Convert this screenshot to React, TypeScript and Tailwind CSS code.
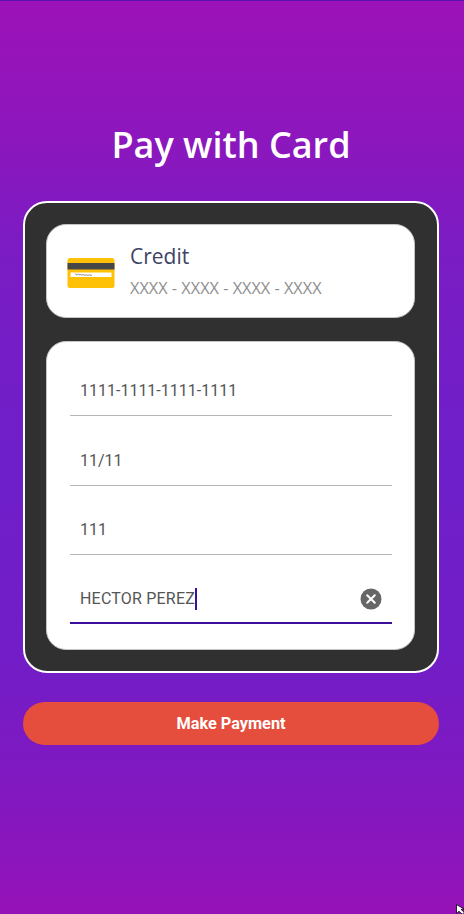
import React from 'react'

const CardIcon = () => (
  <svg width="48" height="32" viewBox="0 0 48 32" className="shrink-0 mt-[3px]">
    <rect x="0.5" y="1" width="47" height="30" rx="2.5" fill="#ffc107" />
    <rect x="0.5" y="6" width="47" height="6.5" fill="#474747" />
    <rect x="3.5" y="15.5" width="41" height="4.5" fill="#ffffff" />
    <path d="M8 17.5c1-1.6 1.6 1.4 2.6 0s1.4 1 2.4.2 1.6 1 2.6.2 1.8.8 3 .2 1.8.6 3 0 2 .6 3.4.2" fill="none" stroke="#555555" strokeWidth="0.7" />
  </svg>
)

const Field = ({ value, active, className }: { value: string; active?: boolean; className: string }) => (
  <div className={`${className} h-[50px] flex items-center px-[10px] ${active ? 'border-b-2 border-[#3b0f9c] pt-[2px]' : 'border-b border-[#b5b5b5]'}`}>
    <span className={active ? "text-[16px] tracking-[0.2px] text-[#555555] font-['Roboto',sans-serif]" : "text-[16px] text-[#555555] font-['Roboto',sans-serif]"}>{value}</span>
    {active && <span className="w-[2px] h-[22px] bg-[#3b0f9c]"></span>}
    {active && (
      <svg width="22" height="22" viewBox="0 0 22 22" className="ml-auto">
        <circle cx="11" cy="11" r="10.5" fill="#666666" />
        <path d="M7.2 7.2l7.6 7.6M14.8 7.2l-7.6 7.6" stroke="#ffffff" strokeWidth="2" strokeLinecap="round" />
      </svg>
    )}
  </div>
)

export default function App() {
  return (
    <div className="relative w-[464px] h-[914px] overflow-hidden border-t border-[#5a12b0] bg-[linear-gradient(to_bottom,#9c12b8_0%,#8c17bd_15%,#7a1cc4_28%,#6e1fc9_50%,#721dc7_72%,#8317bf_88%,#9612b8_100%)] pl-[23px] pr-[25px] font-['Open_Sans',sans-serif]">
      <h1 className="mt-[118px] h-[52px] text-center text-[36px] leading-[52px] font-semibold text-white">
        Pay with Card
      </h1>

      <div className="mt-[30px] h-[472px] rounded-[24px] border-2 border-white bg-[#303030] pl-[21px] pr-[22px] pt-[21px]">
        <div className="h-[94px] rounded-[20px] border border-[#c4c4c4] bg-white flex items-center pl-[20px] gap-[15px]">
          <CardIcon />
          <div>
            <div className="text-[21px] leading-[27px] font-medium text-[#3d4463]">Credit</div>
            <div className="mt-[7px] text-[16.3px] leading-[22px] text-[#8f8f8f]">XXXX - XXXX - XXXX - XXXX</div>
          </div>
        </div>

        <div className="mt-[23px] h-[309px] rounded-[20px] border border-[#c4c4c4] bg-white pl-[23px] pr-[22px] pt-[24px]">
          <Field value="1111-1111-1111-1111" className="" />
          <Field value="11/11" className="mt-[20px]" />
          <Field value="111" className="mt-[19px]" />
          <Field value="HECTOR PEREZ" active className="mt-[19px]" />
        </div>
      </div>

      <button className="mt-[29px] block w-full h-[43px] rounded-full bg-[#e54d3c] text-center text-[16.3px] font-bold text-white font-['Roboto',sans-serif] pt-[2px]">
        Make Payment
      </button>

      {/* mouse pointer caught in the screenshot */}
      <svg width="8" height="10" viewBox="0 0 8 10" className="absolute left-[456px] top-[903px]">
        <path d="M0.5 0.5v9l2.5-2.2 3 2.7h2v-2l-3-2.6 3-0.4z" fill="#ffffff" stroke="#000000" strokeWidth="0.8" />
      </svg>
    </div>
  )
}
